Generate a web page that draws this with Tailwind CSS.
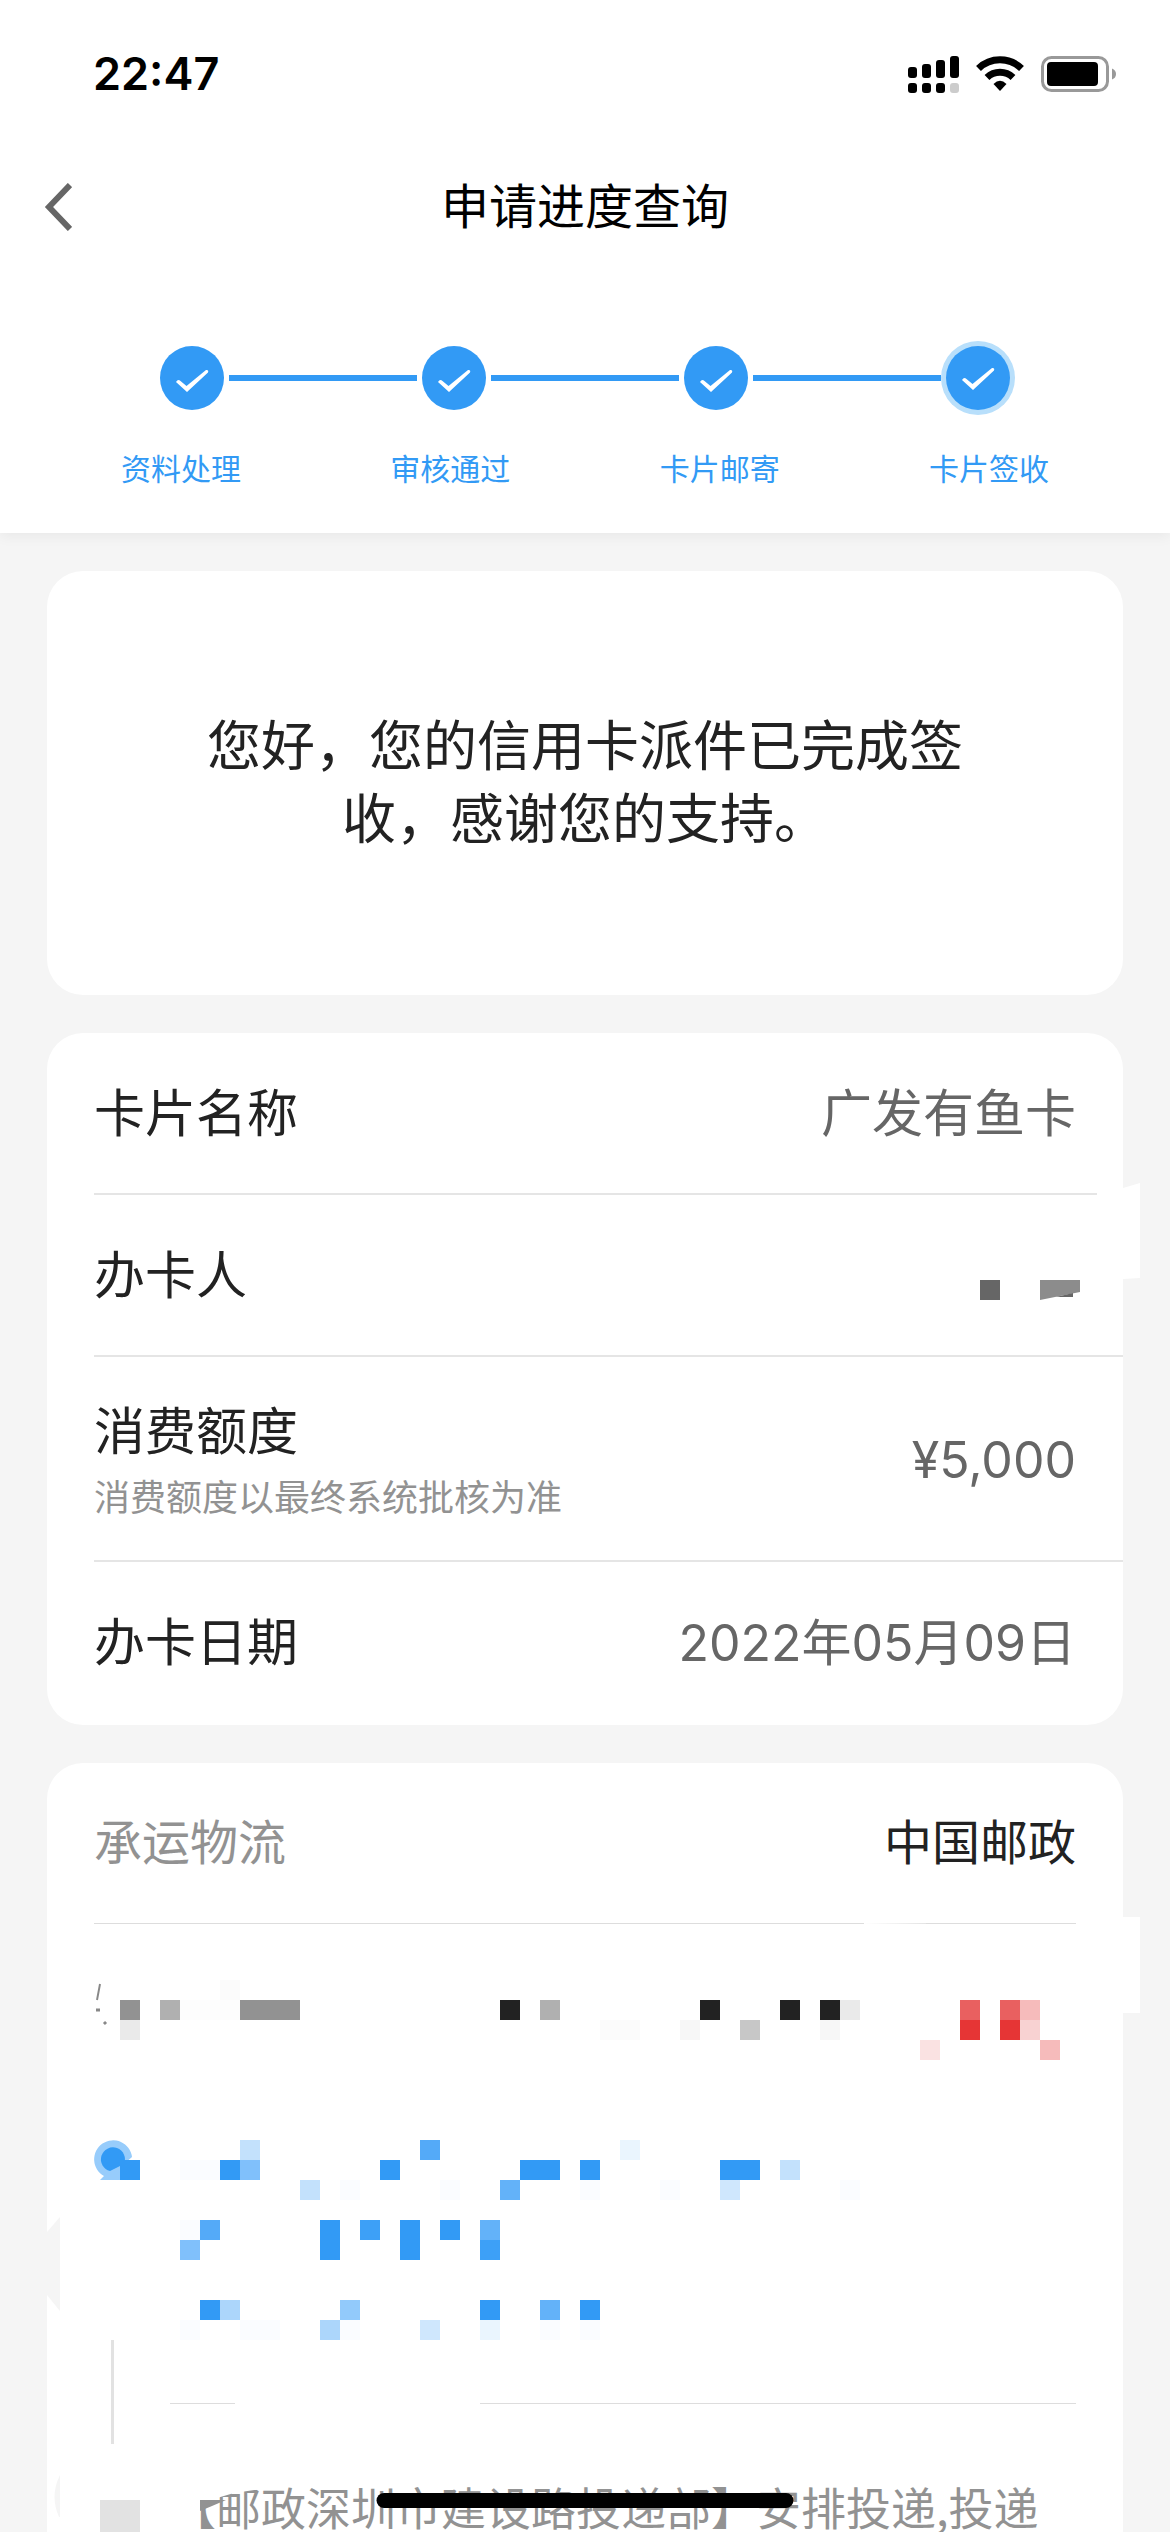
<!DOCTYPE html>
<html lang="zh-CN">
<head>
    <meta charset="UTF-8">
    <meta name="viewport" content="width=device-width, initial-scale=1.0">
    <title>申请进度查询</title>
    <script src="https://cdn.jsdelivr.net/npm/@tailwindcss/browser@4"></script>
</head>
<body class="bg-[#f5f5f5] font-['Inter','Noto_Sans_CJK_SC',sans-serif] text-[#222]">
    <div class="relative h-screen overflow-hidden">
        <header class="relative bg-white shadow-[0_4px_12px_rgba(0,0,0,0.05)]">
            <!-- status bar -->
            <div class="flex h-[148px] items-center justify-between pl-[93px] pr-[54px]">
                <span class="text-[45px] font-semibold text-black">22:47</span>
                <div class="flex items-center">
                    <svg class="h-[40px] w-[52px]" viewBox="0 0 52 40">
                        <rect x="0" y="13" width="9" height="11" rx="3"/>
                        <rect x="14" y="10" width="9" height="14" rx="3"/>
                        <rect x="28" y="6" width="9" height="18" rx="3"/>
                        <rect x="42" y="2" width="9" height="22" rx="3"/>
                        <rect x="0" y="29" width="9" height="10" rx="3"/>
                        <rect x="14" y="29" width="9" height="10" rx="3"/>
                        <rect x="28" y="29" width="9" height="10" rx="3"/>
                        <rect x="42" y="29" width="9" height="10" rx="3" fill="#ccc"/>
                    </svg>
                    <svg class="ml-4 h-[40px] w-[48px]" viewBox="0 0 48 40">
                        <g fill="none" stroke="#000" stroke-width="7">
                            <path d="M2.5 14.5A31 31 0 0 1 45.5 14.5"/>
                            <path d="M11 23.5A19 19 0 0 1 37 23.5"/>
                        </g>
                        <path d="M24 37L17.5 30Q24 23.500 30.500 30Z"/>
                    </svg>
                    <svg class="ml-4 h-[40px] w-[76px]" viewBox="0 0 76 40">
                        <rect x="2.500" y="3.500" width="65" height="33" rx="9" fill="none" stroke="#999" stroke-width="3"/>
                        <rect x="7" y="8" width="51" height="24" rx="4"/>
                        <path d="M72 14.500Q76 16 76 20T72 25.500Z" fill="#999"/>
                    </svg>
                </div>
            </div>

            <!-- title -->
            <div class="relative flex h-[118px] items-center justify-center">
                <button type="button" aria-label="返回" class="absolute left-[44px]">
                    <svg class="h-[48px] w-[28px]" viewBox="0 0 28 48" fill="none" stroke="#666" stroke-width="6">
                        <path d="M26 2L5 24L26 46"/>
                    </svg>
                </button>
                <h1 class="text-[48px] text-black">申请进度查询</h1>
            </div>

            <!-- steps -->
            <div class="flex items-center gap-[5px] px-[160px] pt-[80px]">
                <svg class="size-[64px] shrink-0 rounded-full bg-[#329af5]" viewBox="0 0 64 64" fill="#fff">
                    <path d="M16 36Q18 32.500 20.500 35L26.500 40L46 24Q49 23.500 48 26.500L27 46Z"/>
                </svg>
                <div class="h-[6px] flex-1 bg-[#329af5]"></div>
                <svg class="size-[64px] shrink-0 rounded-full bg-[#329af5]" viewBox="0 0 64 64" fill="#fff">
                    <path d="M16 36Q18 32.500 20.500 35L26.500 40L46 24Q49 23.500 48 26.500L27 46Z"/>
                </svg>
                <div class="h-[6px] flex-1 bg-[#329af5]"></div>
                <svg class="size-[64px] shrink-0 rounded-full bg-[#329af5]" viewBox="0 0 64 64" fill="#fff">
                    <path d="M16 36Q18 32.500 20.500 35L26.500 40L46 24Q49 23.500 48 26.500L27 46Z"/>
                </svg>
                <div class="h-[6px] flex-1 bg-[#329af5]"></div>
                <svg class="size-[64px] shrink-0 rounded-full bg-[#329af5] ring-5 ring-[#b8dffb]" viewBox="0 0 64 64" fill="#fff">
                    <path d="M16 34Q18 30.500 20.500 33L26.500 38L46 22Q49 21.500 48 24.500L27 44Z"/>
                </svg>
            </div>
            <div class="mt-[38px] flex justify-between px-[121px] pb-[43px] text-[30px] leading-[42px] text-[#329af5]">
                <span>资料处理</span>
                <span>审核通过</span>
                <span>卡片邮寄</span>
                <span>卡片签收</span>
            </div>
        </header>

        <main class="flex flex-col gap-[38px] px-[47px] pt-[38px]">
            <section class="rounded-[36px] bg-white px-[146px] py-[139px]">
                <p class="text-center text-[54px] leading-[73px]">您好，您的信用卡派件已完成签收，感谢您的支持。</p>
            </section>

            <section class="relative rounded-[36px] bg-white pl-[47px] text-[51px]">
                <div class="flex h-[162px] items-center justify-between border-b-2 border-[#e5e5e5] pt-[3px] pr-[47px]">
                    <span>卡片名称</span>
                    <span class="text-[#666]">广发有鱼卡</span>
                </div>
                <div class="flex h-[162px] items-center justify-between border-b-2 border-[#e5e5e5] pt-[3px] pr-[43px]">
                    <span>办卡人</span>
                    <svg class="mt-[26px] h-[20px] w-[100px]" viewBox="0 0 100 20">
                        <path d="M0 0h20v20H0z" fill="#666"/>
                        <path d="M60 0h40v12L60 20z" fill="#8c8c8c"/>
                        <path d="M76 17L93 13v4z" fill="#666"/>
                    </svg>
                </div>
                <div class="flex h-[205px] items-center justify-between border-b-2 border-[#e5e5e5] pt-[3px] pr-[47px]">
                    <div>
                        <div class="leading-[76px]">消费额度</div>
                        <div class="text-[36px] leading-[56px] text-[#929292]">消费额度以最终系统批核为准</div>
                    </div>
                    <span class="text-[50px] text-[#666]">¥5,000</span>
                </div>
                <div class="flex h-[163px] items-center justify-between pr-[47px]">
                    <span>办卡日期</span>
                    <span class="text-[50px] text-[#666]">2022年05月09日</span>
                </div>
                <!-- smear over the right edge -->
                <svg class="absolute -right-[17px] top-[150px] h-[96px] w-[43px]" viewBox="0 0 43 96" fill="#fff">
                    <path d="M0 5H26L43 0V95L26 96H0z"/>
                </svg>
            </section>

            <section class="relative rounded-t-[36px] bg-white px-[47px] text-[48px]">
                <div class="relative flex h-[161px] items-center justify-between border-b border-[#ddd]">
                    <span class="text-[#929292]">承运物流</span>
                    <span>中国邮政</span>
                    <div class="absolute -bottom-px right-[150px] h-px w-[62px] bg-linear-to-r from-white to-white/20"></div>
                </div>

                <!-- waybill number, masked in 20px blocks -->
                <svg class="-ml-[14px] mt-[56px] h-[80px] w-[1000px]" viewBox="80 0 1000 80" fill="none" stroke-width="20">
                    <path d="M100 4L97 20" stroke="#888" stroke-width="2"/>
                    <path d="M96 30h4M104 42l2 2" stroke="#888" stroke-width="3"/>
                    <path d="M220 10h20M600 50h40" stroke="#fbfbfb"/>
                    <path d="M180 30h60" stroke="#fdfdfd"/>
                    <path d="M120 30h20M240 30h60" stroke="#929292"/>
                    <path d="M160 30h20M540 30h20" stroke="#b0b0b0"/>
                    <path d="M500 30h20M700 30h20M780 30h20M820 30h20" stroke="#222"/>
                    <path d="M120 50h20M840 30h20" stroke="#eaeaea"/>
                    <path d="M680 50h20M820 50h20" stroke="#f7f7f7"/>
                    <path d="M740 50h20" stroke="#c7c7c7"/>
                    <path d="M960 30h20M1000 30h20" stroke="#e96060"/>
                    <path d="M960 50h20M1000 50h20" stroke="#e63535"/>
                    <path d="M1020 30h20M1040 70h20" stroke="#f6bbbb"/>
                    <path d="M1020 50h20" stroke="#f8d2d2"/>
                    <path d="M920 70h20" stroke="#fae2e2"/>
                </svg>

                <!-- latest tracking entry, masked in 20px blocks -->
                <svg class="-ml-[14px] mt-[80px] h-[200px] w-[1000px]" viewBox="80 0 1000 200" fill="none" stroke-width="20">
                    <path d="M100 40L104 36A19 19 0 1 1 132 17L124 24L120 40z" fill="#97ccfb" stroke="none"/>
                    <path d="M110 31A12 12 0 1 1 124 24z" fill="#329af5" stroke="none"/>
                    <path d="M180 30h40M340 50h20M440 50h20M580 50h20M660 50h20M840 50h20M180 90h20M180 190h20M240 190h40M340 190h20M540 190h20M580 190h20" stroke="#fafcff"/>
                    <path d="M120 30h20M220 30h20M380 30h20M520 30h40M580 30h20M720 30h40M320 90h20M400 90h20M440 90h20M320 110h20M400 110h20M200 170h20M480 170h20M580 170h20" stroke="#329af5"/>
                    <path d="M360 90h20M480 110h20" stroke="#3da0f7"/>
                    <path d="M420 10h20M200 90h20" stroke="#54aaf8"/>
                    <path d="M500 50h20M480 90h20M540 170h20" stroke="#63b2f9"/>
                    <path d="M240 30h20M180 110h20" stroke="#80c0fb"/>
                    <path d="M340 170h20" stroke="#92cafb"/>
                    <path d="M220 170h20M320 190h20" stroke="#acd6fb"/>
                    <path d="M240 10h20M780 30h20M300 50h20" stroke="#c3e1fc"/>
                    <path d="M720 50h20M420 190h20" stroke="#cfe7fd"/>
                    <path d="M620 10h20M480 190h20" stroke="#eaf5fe"/>
                </svg>

                <div class="flex h-[137px] items-start">
                    <div class="ml-[17px] h-[104px] w-[3px] bg-[#e2e2e2]"></div>
                    <div class="ml-[56px] mt-[63px] h-px w-[65px] bg-[#ddd]"></div>
                    <div class="ml-[245px] mt-[63px] h-px flex-1 bg-[#ddd]"></div>
                </div>

                <div class="relative flex items-start">
                    <div class="ml-[6px] mt-[23px] h-[32px] w-[40px] bg-[#e2e2e2]"></div>
                    <p class="ml-[31px] mt-[7px] whitespace-nowrap font-['Noto_Sans_CJK_SC',sans-serif] text-[45px] leading-[46px] text-[#929292]">【邮政深圳市建设路投递部】安排投递,投递</p>
                    <svg class="absolute left-[78px] top-0 h-[40px] w-[90px]" viewBox="0 0 90 40">
                        <path d="M0 0H90V12L62 16L28 26V23H0z" fill="#fff"/>
                        <path d="M28 23H54L40 29L28 34z" fill="#929292"/>
                    </svg>
                </div>

                <!-- smears over the card edges -->
                <div class="absolute -right-[17px] top-[154px] h-[96px] w-[17px] bg-white"></div>
                <svg class="absolute left-0 top-[454px] h-[300px] w-[13px]" viewBox="0 0 13 300" fill="#f5f5f5">
                    <path d="M0 15L13 0V94L0 78z"/>
                    <path d="M13 258Q2 280 13 302z"/>
                </svg>
            </section>
        </main>

        <!-- home indicator -->
        <div class="absolute bottom-[24px] left-1/2 h-[15px] w-[417px] -translate-x-1/2 rounded-full bg-black"></div>
    </div>
</body>
</html>
